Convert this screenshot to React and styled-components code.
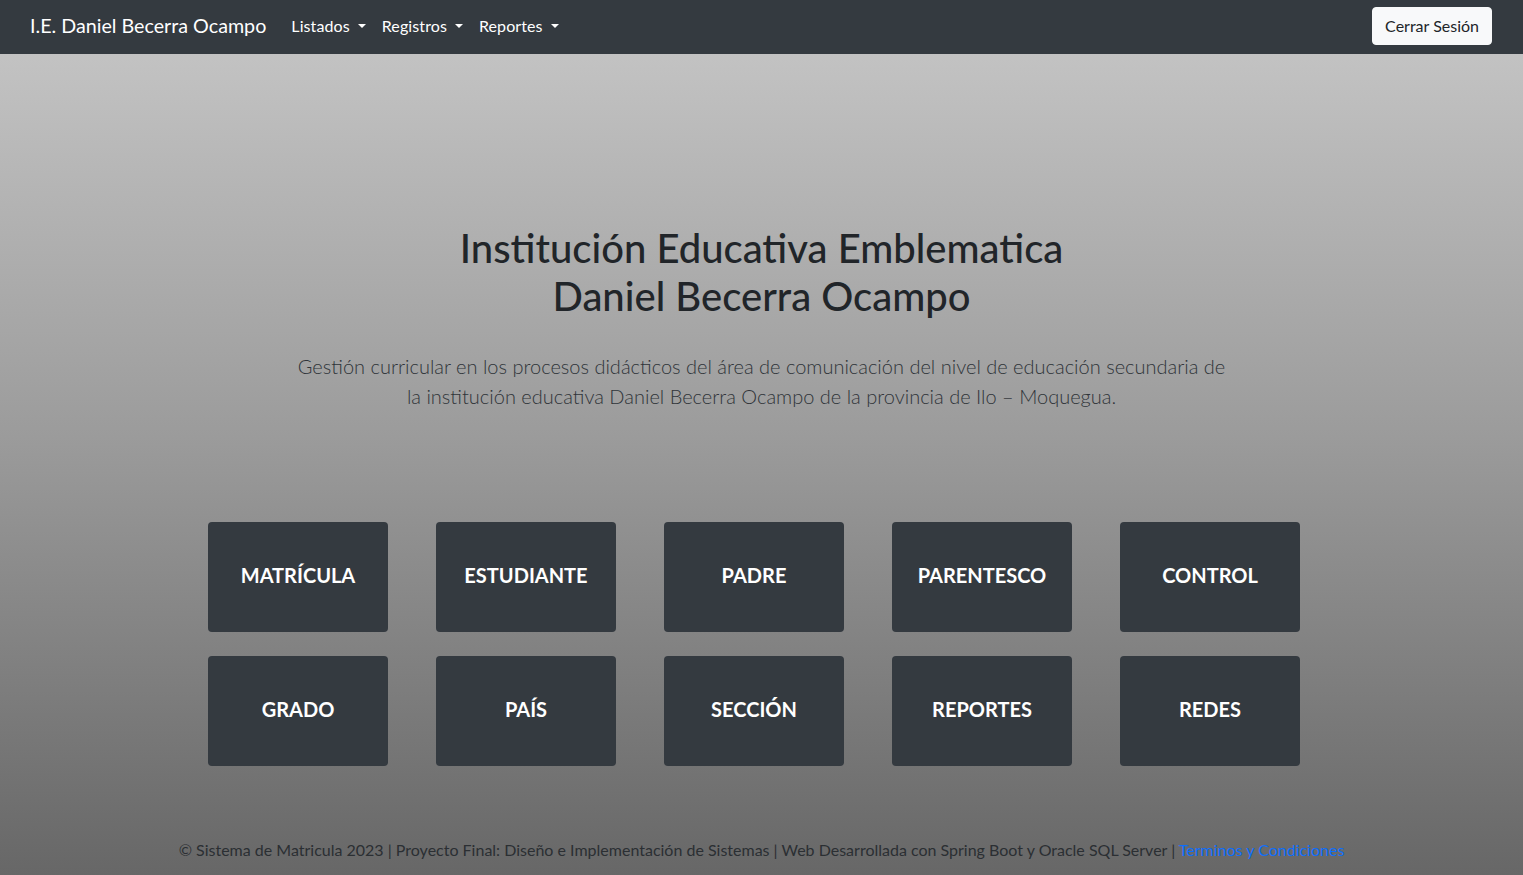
import React from "react";
import styled, { createGlobalStyle } from "styled-components";

const GlobalStyle = createGlobalStyle`
  * {
    box-sizing: border-box;
  }
  html, body {
    margin: 0;
    padding: 0;
  }
  body {
    font-family: "Segoe UI", Lato, "Noto Sans", "Liberation Sans", sans-serif;
    font-size: 16px;
    line-height: 1.5;
    color: #212529;
  }
`;

const Page = styled.div`
  min-height: 875px;
  display: flex;
  flex-direction: column;
  background: linear-gradient(180deg, #c8c8c8 0%, #9b9b9b 50%, #676767 100%);
`;

const Navbar = styled.nav`
  height: 54px;
  background-color: #343a40;
  display: flex;
  align-items: center;
  padding: 0 31px 2px 30px;
`;

const Brand = styled.a`
  color: #fff;
  font-size: 19.7px;
  text-decoration: none;
  margin-right: 17px;
  white-space: nowrap;
`;

const NavList = styled.ul`
  display: flex;
  list-style: none;
  margin: 0;
  padding: 0;
  flex: 1;
`;

const NavLink = styled.a`
  display: inline-block;
  color: #fff;
  padding: 8px;
  text-decoration: none;
  white-space: nowrap;
  letter-spacing: 0.1px;

  &::after {
    content: "";
    display: inline-block;
    margin-left: 0.5em;
    vertical-align: 0.255em;
    border-top: 0.3em solid;
    border-right: 0.3em solid transparent;
    border-left: 0.3em solid transparent;
  }
`;

const LogoutButton = styled.button`
  font-family: inherit;
  font-size: 16px;
  line-height: 1.5;
  color: #212529;
  background-color: #f8f9fa;
  border: 1px solid #f8f9fa;
  border-radius: 4px;
  padding: 6px 12px;
  height: 38px;
  cursor: pointer;
`;

const Hero = styled.section`
  text-align: center;
  padding-top: 170px;
`;

const Title = styled.h1`
  font-size: 40px;
  font-weight: 500;
  line-height: 48px;
  margin: 0 0 31px;
  color: #212529;
`;

const Lead = styled.p`
  font-size: 20px;
  font-weight: 300;
  line-height: 30px;
  margin: 0 auto;
  max-width: 940px;
  color: #2f3439;
`;

const Grid = styled.div`
  display: grid;
  grid-template-columns: repeat(5, 180px);
  gap: 24px 48px;
  justify-content: center;
  padding-right: 15px;
  margin-top: 111px;
`;

const Tile = styled.a`
  height: 110px;
  background-color: #343a40;
  border-radius: 4px;
  display: flex;
  align-items: center;
  justify-content: center;
  color: #fff;
  font-size: 20px;
  font-weight: 700;
  text-decoration: none;
  text-transform: uppercase;
  padding-bottom: 4px;
`;

const Footer = styled.footer`
  margin-top: auto;
  padding: 72px 0 13px;
  text-align: center;
  color: #2b2f33;
  white-space: nowrap;
`;

const FooterLink = styled.a`
  color: #0d6efd;
  text-decoration: none;
`;

const menus = ["Listados", "Registros", "Reportes"];

const tiles = [
  "Matrícula",
  "Estudiante",
  "Padre",
  "Parentesco",
  "Control",
  "Grado",
  "País",
  "Sección",
  "Reportes",
  "Redes",
];

export default function App() {
  return (
    <>
      <GlobalStyle />
      <Page>
        <Navbar>
          <Brand href="#">I.E. Daniel Becerra Ocampo</Brand>
          <NavList>
            {menus.map((m) => (
              <li key={m}>
                <NavLink href="#">{m}</NavLink>
              </li>
            ))}
          </NavList>
          <LogoutButton>Cerrar Sesión</LogoutButton>
        </Navbar>

        <Hero>
          <Title>
            Institución Educativa Emblematica
            <br />
            Daniel Becerra Ocampo
          </Title>
          <Lead>
            Gestión curricular en los procesos didácticos del área de
            comunicación del nivel de educación secundaria de la institución
            educativa Daniel Becerra Ocampo de la provincia de Ilo – Moquegua.
          </Lead>
        </Hero>

        <Grid>
          {tiles.map((t) => (
            <Tile key={t} href="#">
              {t}
            </Tile>
          ))}
        </Grid>

        <Footer>
          © Sistema de Matricula 2023 | Proyecto Final: Diseño e
          Implementación de Sistemas | Web Desarrollada con Spring Boot y
          Oracle SQL Server | <FooterLink href="#">Terminos y Condiciones</FooterLink>
        </Footer>
      </Page>
    </>
  );
}
